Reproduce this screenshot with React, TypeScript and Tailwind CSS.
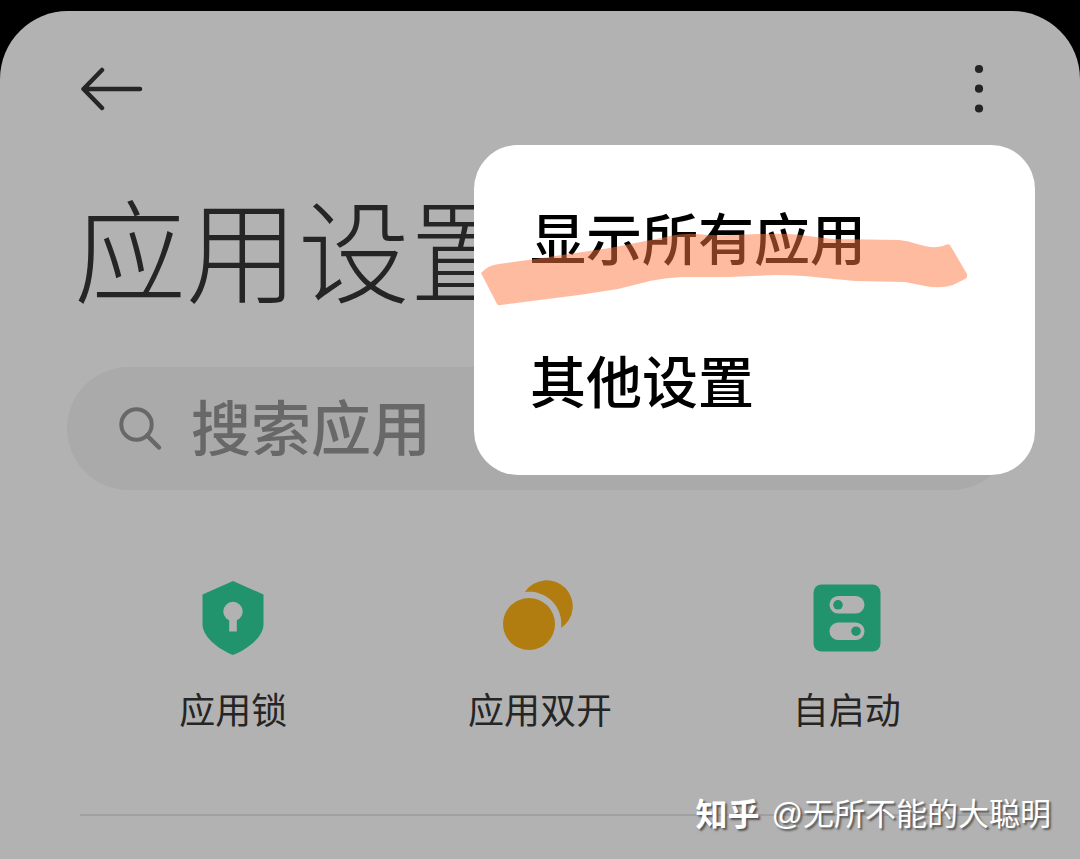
const shortcuts = [
  { label: "应用锁", icon: LockShieldIcon },
  { label: "应用双开", icon: DualAppsIcon },
  { label: "自启动", icon: AutostartIcon },
];

const menuItems = ["显示所有应用", "其他设置"];

function BackIcon() {
  return (
    <svg width="64" height="44" viewBox="0 0 64 44" fill="none" aria-hidden="true">
      <path
        d="M60 22H4M22 3L3.500 22L22 41"
        stroke="#252525"
        strokeWidth="4.500"
        strokeLinecap="round"
        strokeLinejoin="round"
      />
    </svg>
  );
}

function MoreIcon() {
  return (
    <svg width="10" height="50" viewBox="0 0 10 50" fill="#252525" aria-hidden="true">
      <circle cx="5" cy="5" r="4.100" />
      <circle cx="5" cy="24.700" r="4.100" />
      <circle cx="5" cy="44.500" r="4.100" />
    </svg>
  );
}

function SearchIcon() {
  return (
    <svg
      className="shrink-0"
      width="44"
      height="44"
      viewBox="0 0 44 44"
      fill="none"
      stroke="#686868"
      strokeWidth="4"
      aria-hidden="true"
    >
      <circle cx="17.500" cy="17.500" r="15.200" />
      <path d="M28 28.500L40 40.500" strokeWidth="4.500" strokeLinecap="round" />
    </svg>
  );
}

function LockShieldIcon() {
  return (
    <svg width="62" height="74" viewBox="0 0 62 74" aria-hidden="true">
      <path
        d="M31 0L61.500 13.500V43C61.500 55 48 67 31 74C14 67 .5 55 .5 43V13.500Z"
        fill="#22946d"
      />
      <circle cx="31" cy="30.500" r="9.700" fill="#b2b2b2" />
      <path d="M27.200 36H34.800V50.500H27.200Z" fill="#b2b2b2" />
    </svg>
  );
}

function DualAppsIcon() {
  return (
    <svg width="76" height="76" viewBox="0 0 76 76" fill="#b27d10" aria-hidden="true">
      <circle cx="27" cy="44" r="26" />
      <path d="M23 12A26 26 0 1 1 59 48A32 32 0 0 0 23 12Z" />
    </svg>
  );
}

function AutostartIcon() {
  return (
    <svg width="68" height="68" viewBox="0 0 68 68" aria-hidden="true">
      <rect x=".5" y=".5" width="67" height="67" rx="8" fill="#22946d" />
      <rect x="16.500" y="12" width="35" height="17.500" rx="8.750" fill="#b2b2b2" />
      <rect x="16.500" y="38.500" width="35" height="17.500" rx="8.750" fill="#b2b2b2" />
      <circle cx="25" cy="20.800" r="4.800" fill="#22946d" />
      <circle cx="43" cy="47.200" r="4.800" fill="#22946d" />
    </svg>
  );
}

// Hand-drawn marker stroke over the first menu entry
function MarkerStroke() {
  return (
    <svg
      className="pointer-events-none absolute top-[85px] left-1.5"
      width="490"
      height="80"
      viewBox="0 0 490 80"
      aria-hidden="true"
    >
      <path
        d="M1 43Q8 35 19 34L55 29L130 18L186 7Q203 3 217 4Q233 6 250 5L281 4Q305 3 320 5L352 9L419 10Q429 11 437 14Q452 19 463 16Q468 13 470 15L487 44Q488 47 485 49L473 55Q460 59 445 56L425 52L375 51L324 46Q310 45 296 45L249 47H201Q184 48 170 51L138 59L99 65L21 75Q18 76 17 74Z"
        fill="#ff7840"
        fillOpacity=".5"
      />
    </svg>
  );
}

function OverflowMenu() {
  return (
    <div
      role="menu"
      className="absolute top-[134px] right-[45px] w-[561px] rounded-[44px] bg-white pt-6 pb-5"
    >
      {menuItems.map((item) => (
        <button
          key={item}
          type="button"
          role="menuitem"
          className="flex h-[143px] w-full items-center px-14 text-left text-[56px] leading-none font-medium text-black"
        >
          {item}
        </button>
      ))}
      <MarkerStroke />
    </div>
  );
}

export default function App() {
  return (
    <div className="min-h-screen bg-black pt-[11px] font-['Liberation_Sans','Noto_Sans_CJK_SC',sans-serif]">
      <main className="relative flex min-h-[848px] flex-col rounded-t-[68px] bg-[#b2b2b2] text-[#252525]">
        <header className="flex items-center justify-between px-20 pt-[53px]">
          <button type="button" aria-label="返回">
            <BackIcon />
          </button>
          <button type="button" aria-label="更多选项" className="mr-4">
            <MoreIcon />
          </button>
        </header>

        <h1 className="mt-[73px] px-[74px] text-[112px] leading-[140px] font-light">
          应用设置
        </h1>

        <label className="mx-[67px] mt-10 flex h-[123px] items-center gap-7 rounded-full bg-[#aaaaaa] px-[52px]">
          <SearchIcon />
          <input
            type="search"
            aria-label="搜索应用"
            placeholder="搜索应用"
            className="h-20 min-w-0 flex-1 bg-transparent pt-1 text-[60px] font-medium outline-none placeholder:text-[#686868]"
          />
        </label>

        <nav className="mt-[90px] grid grid-cols-3 px-20">
          {shortcuts.map((shortcut) => (
            <button
              key={shortcut.label}
              type="button"
              className="flex flex-col items-center gap-9 text-4xl leading-10"
            >
              <span className="flex h-[76px] items-center">
                <shortcut.icon />
              </span>
              {shortcut.label}
            </button>
          ))}
        </nav>

        <hr className="mx-20 mt-[82px] border-t-2 border-[#a0a0a0]" />

        <OverflowMenu />

        <p className="absolute right-[29px] bottom-6 flex items-center gap-3 text-[31px] leading-10 text-white [text-shadow:2px_2px_2px_#555555]">
          <span className="text-[32px] font-bold">知乎</span>
          <span>@无所不能的大聪明</span>
        </p>
      </main>
    </div>
  );
}
